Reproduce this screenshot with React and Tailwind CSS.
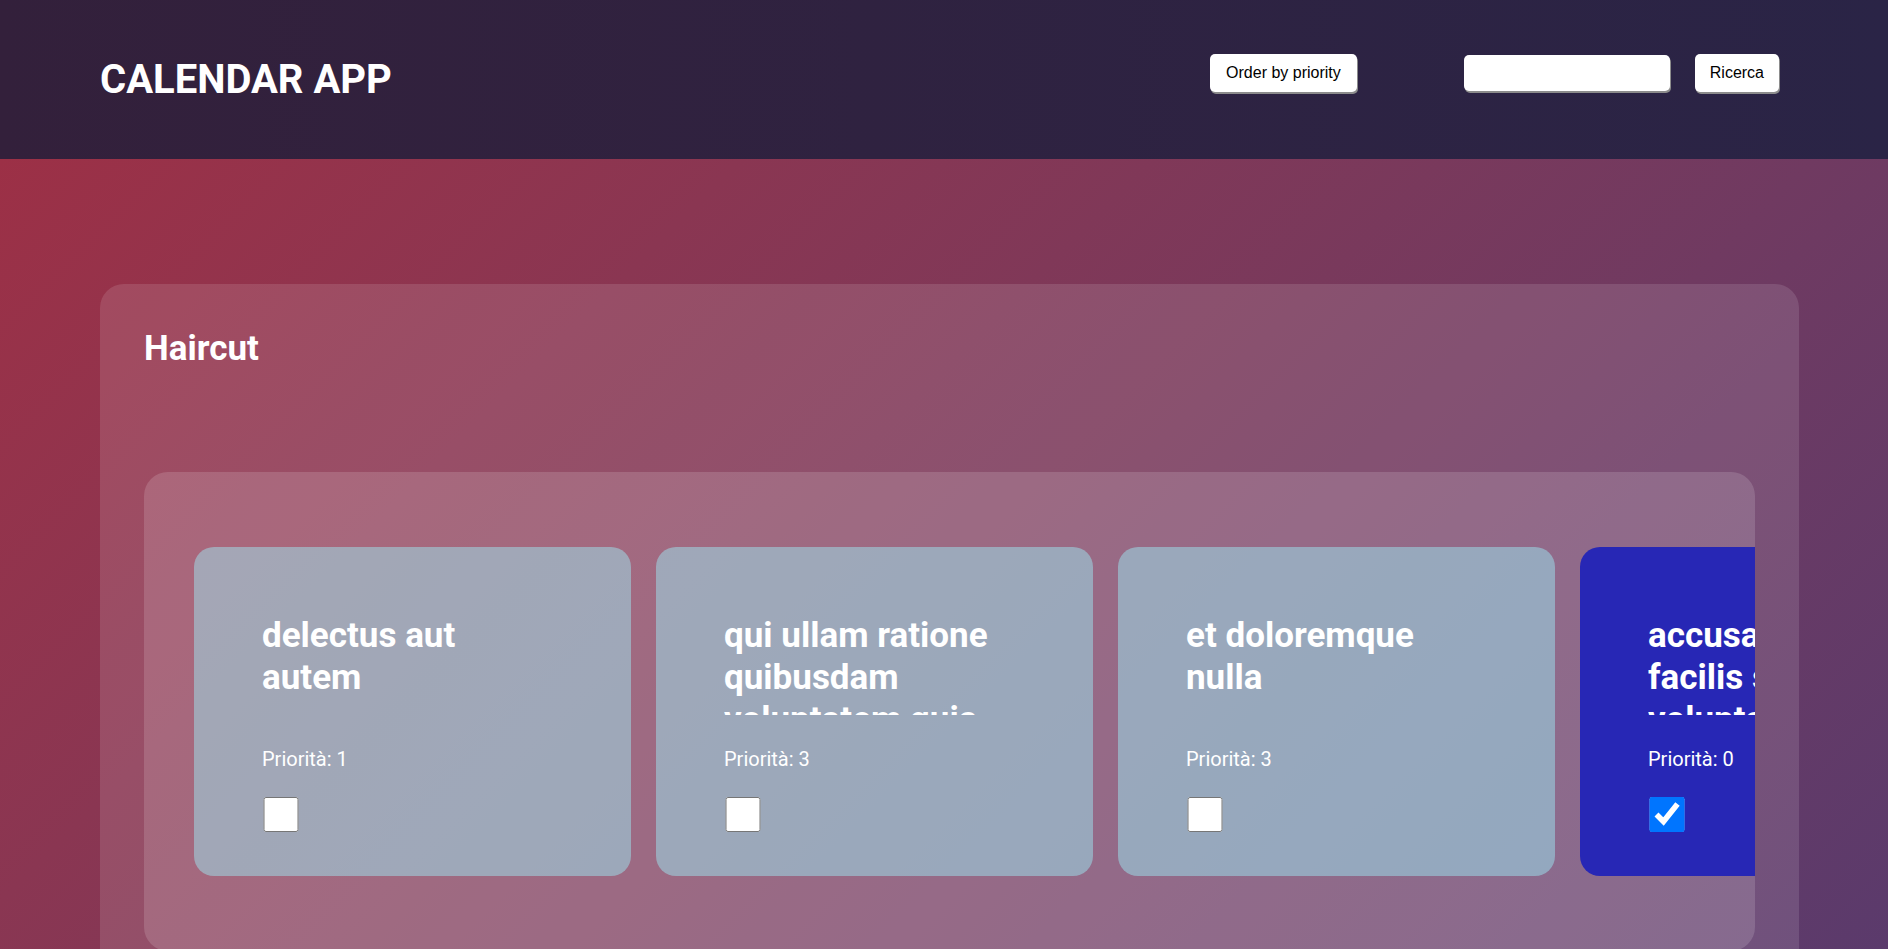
import React from "react";

const todos = [
  { id: 1, title: "delectus aut autem", priority: 1, completed: false },
  {
    id: 6,
    title: "qui ullam ratione quibusdam voluptatem quia",
    priority: 3,
    completed: false,
  },
  { id: 12, title: "et doloremque nulla", priority: 3, completed: false },
  {
    id: 11,
    title: "accusamus eos facilis sint et aut voluptatem",
    priority: 0,
    completed: true,
  },
];

const TodoCard = ({ todo }) => {
  return (
    <div
      className={
        "shrink-0 w-[437px] rounded-[20px] pl-[68px] pr-[89px] pt-[68px] pb-[44px] text-white " +
        (todo.completed ? "bg-[#2727b5]" : "bg-[rgba(158,245,252,0.45)]")
      }
    >
      <h3 className="h-[100px] overflow-hidden text-[35px] font-bold leading-[42px]">
        {todo.title}
      </h3>
      <p className="mt-[32px] text-[20px] leading-[24px]">
        Priorità: {todo.priority}
      </p>
      <input
        type="checkbox"
        defaultChecked={todo.completed}
        className="mt-[26px] ml-[1px] block w-[36px] h-[35px]"
      />
    </div>
  );
};

const App = () => {
  return (
    <div className="min-h-screen w-full font-['Roboto',sans-serif]">
      {/* header */}
      <header className="h-[159px] flex items-center justify-between pl-[100px] pr-[109px] bg-linear-to-r from-[#33203b] to-[#2a2446]">
        <h1 className="text-[40px] font-bold leading-[48px] text-white">
          CALENDAR APP
        </h1>
        <div className="flex items-center mb-[13px] font-['Liberation_Sans',Arial,sans-serif] text-[16px] text-black">
          <button className="h-[38px] px-[16px] rounded-[5px] bg-white shadow-[1px_2px_0_#8c8c8c]">
            Order by priority
          </button>
          <input
            type="text"
            className="ml-[107px] w-[206px] h-[36px] rounded-[5px] bg-white px-2 shadow-[1px_2px_0_#8c8c8c] outline-none"
          />
          <button className="ml-[25px] h-[38px] px-[15px] rounded-[5px] bg-white shadow-[1px_2px_0_#8c8c8c]">
            Ricerca
          </button>
        </div>
      </header>

      {/* main */}
      <main className="pt-[125px] pb-[60px] bg-linear-135 from-[#9c3046] to-[#583a6d]">
        <section className="ml-[100px] w-[1699px] rounded-3xl bg-white/[0.12] p-[44px]">
          <h2 className="text-[35px] font-bold leading-[42px] text-white">
            Haircut
          </h2>
          <div className="mt-[102px] rounded-3xl bg-white/15 pl-[50px] pt-[75px] pb-[75px] overflow-hidden">
            <div className="flex gap-[25px]">
              {todos.map((todo) => (
                <TodoCard key={todo.id} todo={todo} />
              ))}
            </div>
          </div>
        </section>
      </main>
    </div>
  );
};

export default App;
